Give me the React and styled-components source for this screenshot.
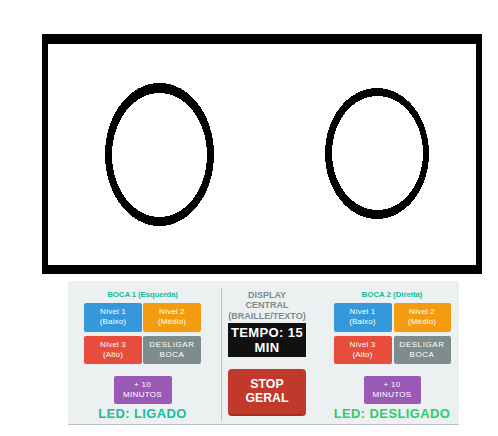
import React from "react";
import styled, { createGlobalStyle } from "styled-components";

const GlobalStyle = createGlobalStyle`
  * { box-sizing: border-box; }
  body { margin: 0; background: #fff; font-family: "Liberation Sans", Arial, sans-serif; }
`;

const Page = styled.main`
  width: 498px;
  height: 436px;
  padding: 34px 16px 0 42px;
  overflow: hidden;
`;

const Cooktop = styled.section`
  width: 440px;
  height: 240px;
  border: solid #000;
  border-width: 10px 6px 9px;
`;

const Burners = styled.svg`
  display: block;
  width: 428px;
  height: 221px;
`;

const Panel = styled.section`
  display: flex;
  width: 391px;
  height: 144px;
  margin: 7px 0 0 26px;
  background: #ecf0f1;
  border-bottom: 1px solid #bdc3c7;
`;

const BurnerControls = styled.div`
  display: flex;
  flex: 0 0 153px;
  flex-direction: column;
  align-items: center;
  padding: ${(p) => p.$padding};
`;

const Title = styled.h2`
  margin: 0 0 4px;
  color: #1abc9c;
  font-size: 8px;
  line-height: 9px;
  letter-spacing: ${(p) => p.$spacing}px;
  white-space: nowrap;
`;

const Levels = styled.div`
  display: grid;
  grid-template-columns: 58px ${(p) => p.$second}px;
  gap: 4px ${(p) => p.$gap}px;
`;

const Button = styled.button`
  display: flex;
  align-items: center;
  justify-content: center;
  width: ${(p) => p.$width || "auto"};
  height: 28.5px;
  padding: 0;
  border: 0;
  border-radius: 2px;
  background: ${(p) => p.$color};
  color: #fff;
  font: 8px/10px "Liberation Sans", Arial, sans-serif;
  letter-spacing: ${(p) => p.$spacing || 0.15}px;
  text-align: center;
  white-space: pre;
`;

const TimeButton = styled(Button)`
  height: 28px;
  margin-top: 11.5px;
`;

const Led = styled.div`
  margin-top: 2px;
  color: ${(p) => p.$color};
  font-size: 13px;
  font-weight: bold;
  line-height: 15px;
  letter-spacing: 0.38px;
  white-space: nowrap;
`;

const Center = styled.div`
  flex: 0 0 85px;
  height: 133px;
  margin-top: 7px;
  padding-left: 6px;
  border-left: 1px solid #bdc3c7;
  text-align: center;
`;

const DisplayLabel = styled.div`
  display: flex;
  flex-direction: column;
  align-items: center;
  padding-top: 2px;
  width: 78px;
  color: #7f8c8d;
  font-size: 9px;
  font-weight: bold;
  line-height: 10.4px;
  white-space: nowrap;
`;

const Display = styled.div`
  width: 78px;
  height: 34px;
  margin-top: 2px;
  padding-top: 2px;
  background: #111;
  color: #fff;
  font-size: 13px;
  font-weight: bold;
  line-height: 15px;
  letter-spacing: 0.4px;
  white-space: pre;
`;

const Stop = styled.button`
  display: block;
  width: 78px;
  height: 47px;
  margin-top: 12px;
  padding: 0 0 2px;
  border: 0;
  border-bottom: 2px solid #a92b20;
  border-radius: 4px;
  background: #c0392b;
  color: #fff;
  font: bold 12.3px/14px "Liberation Sans", Arial, sans-serif;
  white-space: pre;
`;

function Controls({ title, titleSpacing, padding, second, gap, timeWidth, led, ledColor }) {
  return (
    <BurnerControls $padding={padding}>
      <Title $spacing={titleSpacing}>{title}</Title>
      <Levels $second={second} $gap={gap}>
        <Button $color="#3498db">{"Nível 1\n(Baixo)"}</Button>
        <Button $color="#f39c12">{"Nível 2\n(Médio)"}</Button>
        <Button $color="#e74c3c">{"Nível 3\n(Alto)"}</Button>
        <Button $color="#7f8c8d" $spacing={0.6}>{"DESLIGAR\nBOCA"}</Button>
      </Levels>
      <TimeButton $color="#9b59b6" $width={timeWidth} $spacing={0.3}>{"+ 10\nMINUTOS"}</TimeButton>
      <Led $color={ledColor}>{led}</Led>
    </BurnerControls>
  );
}

export default function App() {
  return (
    <>
      <GlobalStyle />
      <Page>
        <Cooktop>
          <Burners viewBox="48 44 428 221" shapeRendering="crispEdges" fillRule="evenodd">
            <path d="M105 154.5a54.5 71.5 0 1 0 109 0a54.5 71.5 0 1 0 -109 0ZM112 155a47.5 62 0 1 0 95 0a47.5 62 0 1 0 -95 0Z" />
            <path d="M325 153.5a52 65.5 0 1 0 104 0a52 65.5 0 1 0 -104 0ZM332 153a45.5 57 0 1 0 91 0a45.5 57 0 1 0 -91 0Z" />
          </Burners>
        </Cooktop>
        <Panel>
          <Controls title="BOCA 1 (Esquerda)" titleSpacing={-0.2} padding="9px 4px 0 0" second={58} gap={1}
            timeWidth="58px" led="LED: LIGADO" ledColor="#1abc9c" />
          <Center>
            <DisplayLabel>
              <span>DISPLAY</span>
              <span>CENTRAL</span>
              <span>(BRAILLE/TEXTO)</span>
            </DisplayLabel>
            <Display>{"TEMPO: 15\nMIN"}</Display>
            <Stop>{"STOP\nGERAL"}</Stop>
          </Center>
          <Controls title="BOCA 2 (Direita)" titleSpacing={-0.1} padding="9px 0 0 19px" second={57} gap={2}
            timeWidth="57px" led="LED: DESLIGADO" ledColor="#2ecc71" />
        </Panel>
      </Page>
    </>
  );
}
